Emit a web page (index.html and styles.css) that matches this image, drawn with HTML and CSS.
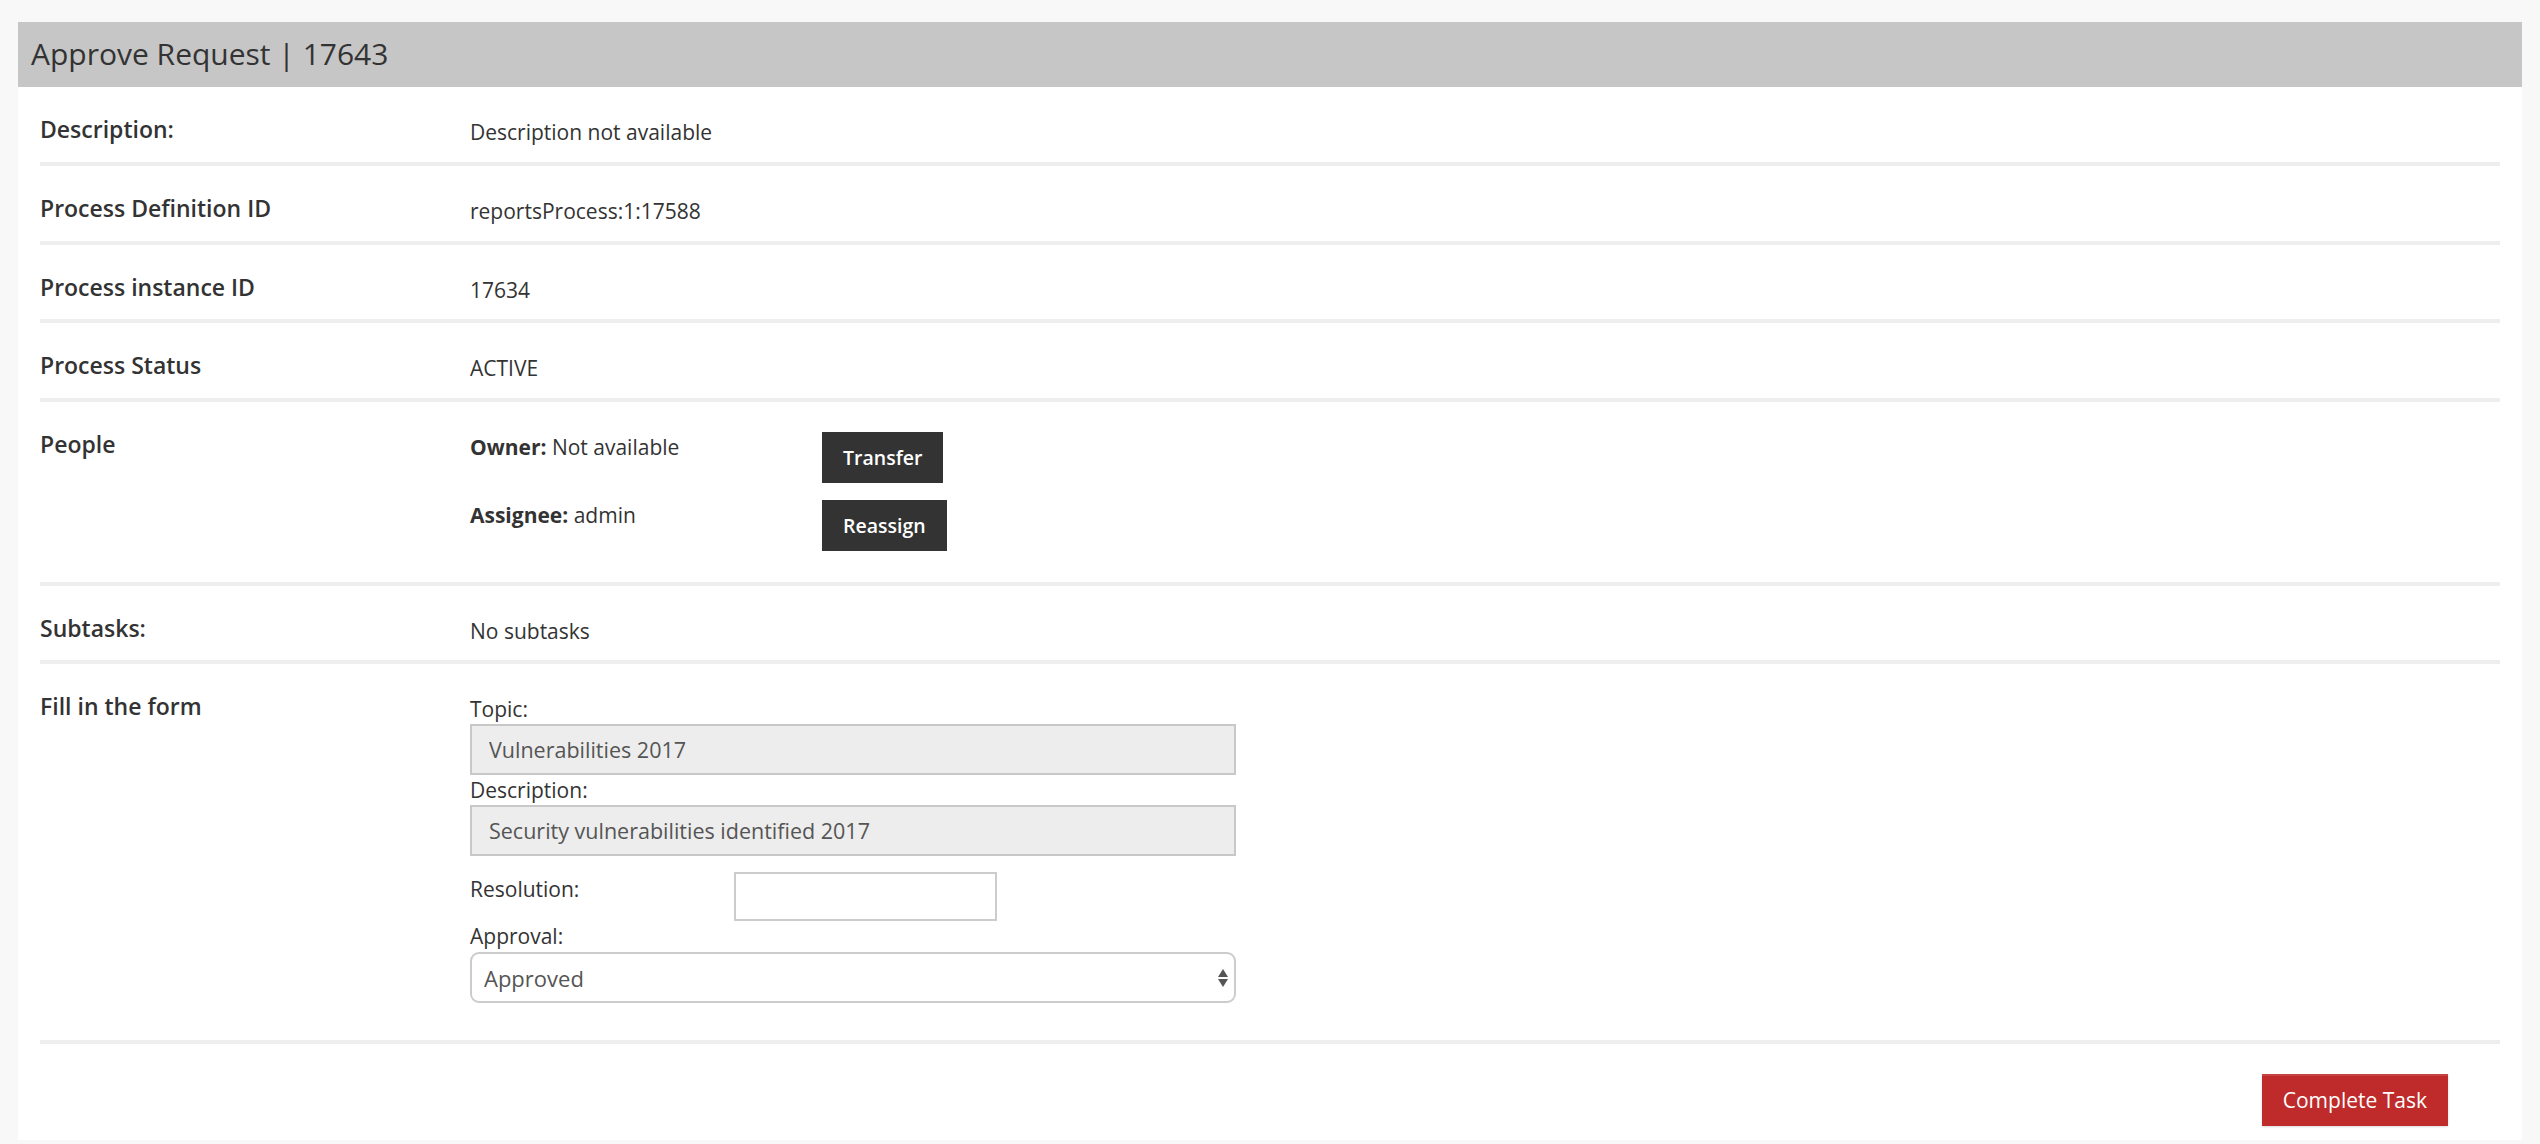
FILE: index.html
```html
<!DOCTYPE html>
<html lang="en">

<head>
    <meta charset="UTF-8">
    <meta name="viewport" content="width=device-width, initial-scale=1.0">
    <title>Approve Request | 17643</title>
    <link rel="stylesheet" href="styles.css">
</head>

<body>

    <div class="task-panel">
        <div class="task-header">
            <h1>Approve Request | 17643</h1>
        </div>

        <div class="task-body">
            <div class="field-row">
                <div class="field-label">Description:</div>
                <div class="field-value">Description not available</div>
            </div>
            <div class="field-row">
                <div class="field-label">Process Definition ID</div>
                <div class="field-value">reportsProcess:1:17588</div>
            </div>
            <div class="field-row">
                <div class="field-label">Process instance ID</div>
                <div class="field-value">17634</div>
            </div>
            <div class="field-row">
                <div class="field-label">Process Status</div>
                <div class="field-value">ACTIVE</div>
            </div>

            <!-- People -->
            <div class="field-row">
                <div class="field-label">People</div>
                <div class="field-value people">
                    <div class="person"><strong>Owner:</strong> Not available</div>
                    <button class="btn-dark">Transfer</button>
                    <div class="person"><strong>Assignee:</strong> admin</div>
                    <button class="btn-dark">Reassign</button>
                </div>
            </div>

            <div class="field-row">
                <div class="field-label">Subtasks:</div>
                <div class="field-value">No subtasks</div>
            </div>

            <!-- Task form -->
            <div class="field-row">
                <div class="field-label">Fill in the form</div>
                <div class="field-value task-form">
                    <label for="topic">Topic:</label>
                    <input id="topic" class="form-input" type="text" value="Vulnerabilities 2017" readonly>
                    <label for="description">Description:</label>
                    <input id="description" class="form-input" type="text" value="Security vulnerabilities identified 2017" readonly>

                    <div class="inline-field">
                        <label for="resolution">Resolution:</label>
                        <input id="resolution" class="resolution-input" type="text">
                    </div>

                    <label for="approval">Approval:</label>
                    <div class="select-wrap">
                        <select id="approval" class="form-select">
                            <option>Approved</option>
                            <option>Rejected</option>
                        </select>
                        <svg class="select-arrows" width="10" height="18" viewBox="0 0 10 18">
                            <polygon points="0,8 5,0 10,8" />
                            <polygon points="0,10 10,10 5,18" />
                        </svg>
                    </div>
                </div>
            </div>

            <div class="task-footer">
                <button class="btn-complete">Complete Task</button>
            </div>
        </div>
    </div>

</body>

</html>
```

FILE: styles.css
```css
* {
    box-sizing: border-box;
    margin: 0;
    padding: 0;
}

body {
    font-family: "Open Sans", "Noto Sans", Arial, sans-serif;
    background-color: #f8f8f8;
    color: #333;
    padding: 22px 18px 0;
    overflow: hidden;
}

.task-panel {
    background-color: #ffffff;
}

.task-header {
    background-color: #c6c6c6;
    height: 65.33px;
    padding: 0 13px;
}

.task-header h1 {
    font-size: 30px;
    font-weight: 400;
    line-height: 64px;
    color: #333;
}

.task-body {
    padding: 0 22px;
}

.field-row {
    display: flex;
    align-items: flex-start;
    padding: 26px 0 14.67px;
    border-bottom: 4px solid #eeeeee;
}

.field-label {
    width: 430px;
    flex-shrink: 0;
    font-size: 23px;
    font-weight: 600;
    line-height: 33px;
    color: #333;
}

.field-value {
    font-size: 21px;
    line-height: 30px;
    padding-top: 4px;
    color: #333;
}

/* people block */
.people {
    display: grid;
    grid-template-columns: 352px auto;
    align-items: start;
    row-gap: 17px;
    padding-bottom: 16px;
}

.people .person {
    margin-top: 0;
}

.people strong {
    font-weight: 700;
}

.btn-dark {
    justify-self: start;
    height: 51px;
    padding: 0 21px;
    border: none;
    background-color: #333;
    color: #fff;
    font-family: inherit;
    font-size: 19.5px;
    font-weight: 600;
}

/* form */
.task-form {
    width: 766px;
    margin-bottom: 22px;
}

.task-form label {
    display: block;
    font-size: 21px;
    line-height: 30px;
    color: #333;
}

.form-input {
    display: block;
    width: 766px;
    height: 51px;
    padding: 0 17px;
    border: 2px solid #c8c8c8;
    background-color: #ededed;
    color: #555;
    font-family: inherit;
    font-size: 21.5px;
    outline: none;
}

.inline-field {
    display: flex;
    align-items: flex-start;
    margin-top: 16px;
}

.inline-field label {
    width: 264px;
    padding-top: 2px;
}

.resolution-input {
    width: 263px;
    height: 49px;
    border: 2px solid #cccccc;
    background-color: #fff;
    font-family: inherit;
    font-size: 21px;
    padding: 0 10px;
    outline: none;
}

.select-wrap {
    position: relative;
    margin-top: 1px;
}

.form-select {
    display: block;
    width: 766px;
    height: 51px;
    padding: 0 12px;
    border: 2px solid #cccccc;
    border-radius: 9px;
    background-color: #fff;
    color: #555;
    font-family: inherit;
    font-size: 22px;
    -webkit-appearance: none;
    appearance: none;
    outline: none;
}

.select-arrows {
    position: absolute;
    right: 8px;
    top: 17px;
    fill: #555;
    pointer-events: none;
}

/* footer */
.task-footer {
    display: flex;
    justify-content: flex-end;
    padding: 30px 52px 14px 0;
}

.btn-complete {
    height: 52px;
    padding: 0 21px;
    border: none;
    background-color: #bf2a2a;
    box-shadow: inset 0 2px 0 rgba(255, 255, 255, 0.12), 0 1px 2px rgba(0, 0, 0, 0.15);
    color: #fff;
    font-family: inherit;
    font-size: 21px;
    font-weight: 400;
}
```
